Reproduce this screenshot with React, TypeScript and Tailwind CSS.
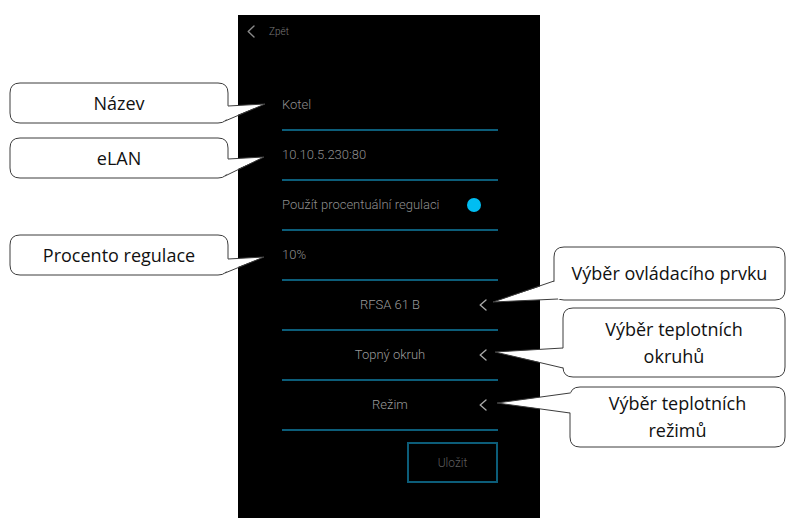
import React from "react";

type Box = { x: number; y: number; w: number; h: number };
type Pt = [number, number];
type CalloutDef = { box: Box; b1: Pt; tip: Pt; b2: Pt; side: "left" | "right"; lines: string[] };

const callouts: CalloutDef[] = [
  { box: { x: 10, y: 83, w: 218, h: 40 }, b1: [228, 106], tip: [265, 104], b2: [225, 121], side: "right", lines: ["Název"] },
  { box: { x: 10, y: 138, w: 218, h: 40 }, b1: [228, 159], tip: [264, 157], b2: [225, 176], side: "right", lines: ["eLAN"] },
  { box: { x: 10, y: 235, w: 218, h: 40 }, b1: [228, 259], tip: [264, 257], b2: [225, 273], side: "right", lines: ["Procento regulace"] },
  { box: { x: 554, y: 247, w: 231, h: 53 }, b1: [554, 281], tip: [493, 302], b2: [558, 299], side: "left", lines: ["Výběr ovládacího prvku"] },
  { box: { x: 563, y: 308, w: 222, h: 69 }, b1: [563, 348], tip: [495, 352], b2: [563, 368], side: "left", lines: ["Výběr teplotních", "okruhů"] },
  { box: { x: 570, y: 387, w: 215, h: 60 }, b1: [570, 393], tip: [497, 403], b2: [570, 413], side: "left", lines: ["Výběr teplotních", "režimů"] },
];

function rrect(b: Box, r: number) {
  const x0 = b.x, y0 = b.y, x1 = b.x + b.w, y1 = b.y + b.h;
  return `M${x0 + r},${y0} H${x1 - r} Q${x1},${y0} ${x1},${y0 + r} V${y1 - r} Q${x1},${y1} ${x1 - r},${y1} H${x0 + r} Q${x0},${y1} ${x0},${y1 - r} V${y0 + r} Q${x0},${y0} ${x0 + r},${y0} Z`;
}

function CalloutShapes() {
  return (
    <svg className="absolute left-0 top-0 pointer-events-none" width={789} height={518} viewBox="0 0 789 518">
      {callouts.map((c, i) => {
        const d = c.side === "right" ? -2.5 : 2.5;
        return (
          <g key={i}>
            <path d={rrect(c.box, 10)} fill="#ffffff" stroke="#3c3c3c" strokeWidth={1} />
            <polygon
              points={`${c.b1[0] + d},${c.b1[1]} ${c.tip[0]},${c.tip[1]} ${c.b2[0] + d},${c.b2[1]}`}
              fill="#ffffff"
            />
            <polyline
              points={`${c.b1[0]},${c.b1[1]} ${c.tip[0]},${c.tip[1]} ${c.b2[0]},${c.b2[1]}`}
              fill="none"
              stroke="#3c3c3c"
              strokeWidth={1}
              strokeLinejoin="miter"
            />
          </g>
        );
      })}
    </svg>
  );
}

function CalloutTexts() {
  return (
    <>
      {callouts.map((c, i) => (
        <div
          key={i}
          className="absolute flex flex-col items-center justify-center text-center text-[18px] leading-[27px] text-[#111]"
          style={{ left: c.box.x, top: c.box.y, width: c.box.w, height: c.box.h, fontFamily: '"Open Sans", sans-serif' }}
        >
          {c.lines.map((l, j) => (
            <span key={j}>{l}</span>
          ))}
        </div>
      ))}
    </>
  );
}

function Chevron({ w = 8, h = 12, color = "#a8a8a8" }: { w?: number; h?: number; color?: string }) {
  return (
    <svg width={w} height={h} viewBox={`0 0 ${w} ${h}`}>
      <path d={`M${w - 1} 1 L1.2 ${h / 2} L${w - 1} ${h - 1}`} fill="none" stroke={color} strokeWidth={1.4} strokeLinecap="round" strokeLinejoin="round" />
    </svg>
  );
}

function FieldRow({ children, center = false }: { children: React.ReactNode; center?: boolean }) {
  return (
    <div className={`relative flex h-[50px] items-center border-b-2 border-[#0c5d79] ${center ? "justify-center" : ""}`}>
      {children}
    </div>
  );
}

function SelectRow({ label }: { label: string }) {
  return (
    <FieldRow center>
      <span className="text-[13px] font-light text-[#9a9a9a]">{label}</span>
      <span className="absolute right-[11px] top-[18px] flex">
        <Chevron />
      </span>
    </FieldRow>
  );
}

export default function App() {
  return (
    <div className="relative h-[518px] w-[789px] overflow-hidden bg-white" style={{ fontFamily: 'Roboto, "Noto Sans", sans-serif' }}>
      <div className="pl-[238px] pt-[15px]">
        <div className="flex h-[503px] w-[302px] flex-col bg-black">
          <div className="flex h-[32px] items-center pl-[9px]">
            <Chevron w={8} h={13} color="#8a8a8a" />
            <span className="ml-[14px] text-[10px] font-light text-[#7a7a7a]">Zpět</span>
          </div>
          <div className="ml-[44px] mt-[34px] flex w-[216px] flex-col">
            <FieldRow>
              <span className="text-[13px] font-light text-[#8e8e8e]">Kotel</span>
            </FieldRow>
            <FieldRow>
              <span className="text-[13px] font-light text-[#8e8e8e]">10.10.5.230:80</span>
            </FieldRow>
            <FieldRow>
              <div className="flex w-full items-center justify-between pr-[17px]">
                <span className="text-[13px] font-light text-[#8e8e8e]">Použít procentuální regulaci</span>
                <span className="h-[14px] w-[14px] rounded-full bg-[#00bdf2]" />
              </div>
            </FieldRow>
            <FieldRow>
              <span className="text-[13px] font-light text-[#8e8e8e]">10%</span>
            </FieldRow>
            <SelectRow label="RFSA 61 B" />
            <SelectRow label="Topný okruh" />
            <SelectRow label="Režim" />
            <div className="mt-[11px] flex justify-end">
              <button className="flex h-[41px] w-[91px] items-center justify-center border-2 border-[#0c5d79] text-[12px] font-light text-[#5e5e5e]">
                Uložit
              </button>
            </div>
          </div>
        </div>
      </div>
      <CalloutShapes />
      <CalloutTexts />
    </div>
  );
}
